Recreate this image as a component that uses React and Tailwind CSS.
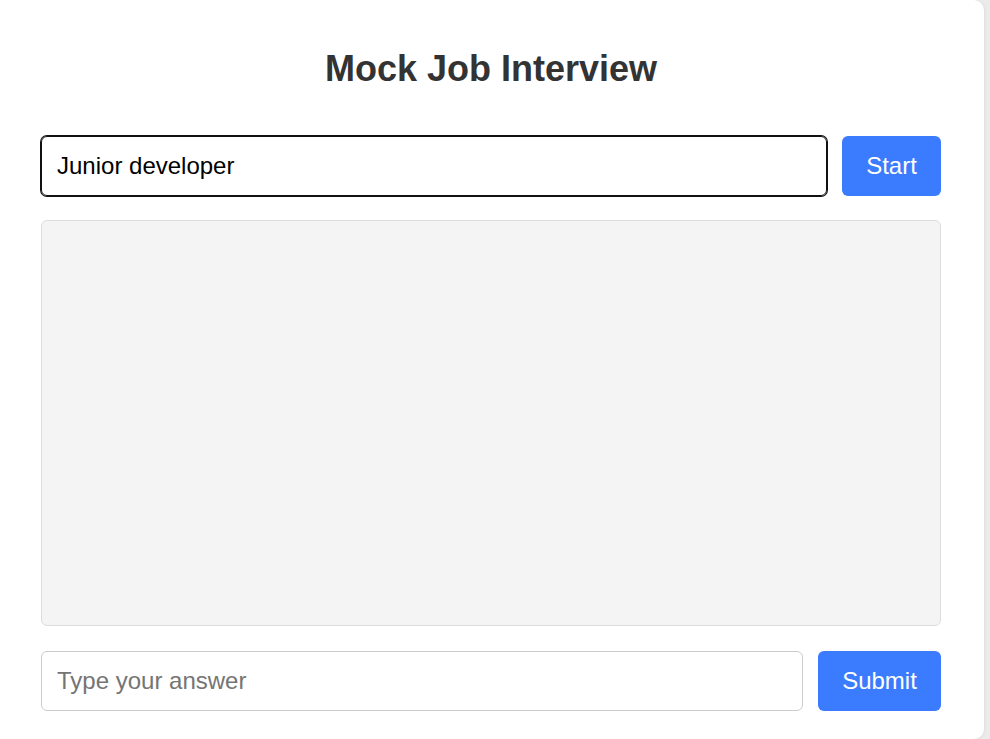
import React, { useState } from 'react';

const App = () => {
  const [role, setRole] = useState('Junior developer');
  const [answer, setAnswer] = useState('');

  return (
    <div className="min-h-screen bg-[#ebebeb] font-['Liberation_Sans',Arial,sans-serif]">
      <div className="w-[984px] h-[739px] bg-white rounded-r-[10px] pl-[41px] pr-[43px] pt-[48px] shadow-[1px_0_3px_rgba(0,0,0,0.06)]">
        <h1 className="text-center text-[36px] font-bold text-[#333] leading-[41px]">Mock Job Interview</h1>

        <div className="flex gap-[15px] mt-[47px]">
          <input
            value={role}
            onChange={(e) => setRole(e.target.value)}
            className="flex-1 h-[60px] px-[15px] text-[24px] text-black border border-[#111] rounded-[6px] shadow-[0_0_0_1px_#111] outline-none"
          />
          <button className="w-[99px] h-[60px] bg-[#3b7bfd] text-white text-[24px] rounded-[6px]">
            Start
          </button>
        </div>

        <div className="mt-[24px] h-[406px] bg-[#f4f4f4] border border-[#dddddd] rounded-[6px]"></div>

        <div className="flex gap-[15px] mt-[25px]">
          <input
            value={answer}
            onChange={(e) => setAnswer(e.target.value)}
            placeholder="Type your answer"
            className="flex-1 h-[60px] px-[15px] text-[24px] text-black placeholder:text-[#757575] border border-[#cccccc] rounded-[6px] outline-none"
          />
          <button className="w-[123px] h-[60px] bg-[#3b7bfd] text-white text-[24px] rounded-[6px]">
            Submit
          </button>
        </div>
      </div>
    </div>
  );
};

export default App;
